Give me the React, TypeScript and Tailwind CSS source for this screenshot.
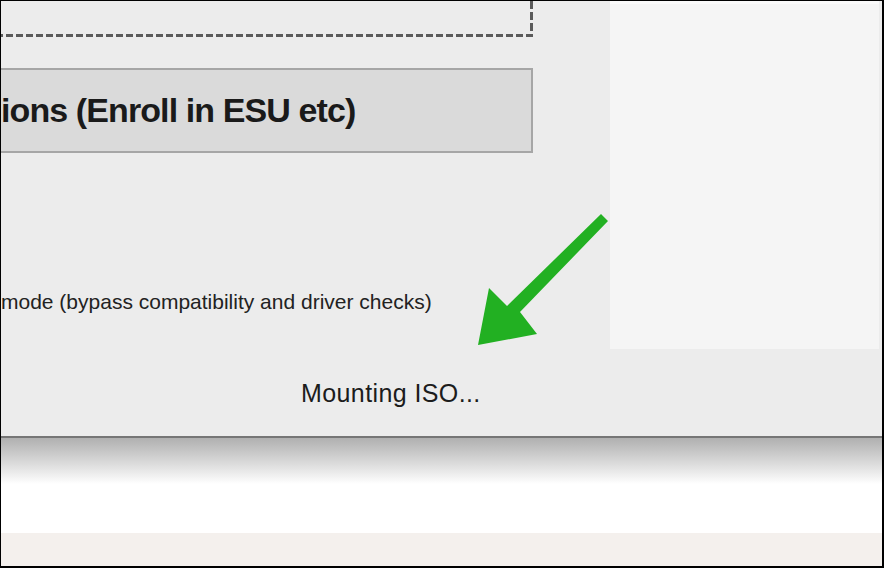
import React from "react";

export default function App() {
  return (
    <div className="relative w-[884px] h-[568px] overflow-hidden bg-white border-t border-l border-r-2 border-b-2 border-black flex flex-col font-['Liberation_Sans',Arial,sans-serif]">
      {/* window */}
      <div className="h-[435px] bg-[#ececec] flex flex-col shrink-0 overflow-hidden">
        <div className="flex h-[348px]">
          <div className="w-[609px] flex flex-col overflow-hidden shrink-0">
            <div className="w-[532px] h-[36px] flex flex-col shrink-0">
              <div className="flex-1 flex justify-end">
                <div className="w-[3px] h-full bg-[repeating-linear-gradient(180deg,#5a5a5a_0_8px,transparent_8px_11px)]" />
              </div>
              <div className="h-[3px] w-full bg-[repeating-linear-gradient(270deg,#5a5a5a_0_7px,transparent_7px_10px)]" />
            </div>
            <div className="mt-[31px] ml-[-20px] w-[552px] h-[85px] border-2 border-[#a6a6a6] bg-[#dadada] flex items-center pl-[18px] pb-[2px] shrink-0">
              <span className="text-[34px] font-bold text-[#1a1a1a] tracking-[-0.9px] whitespace-nowrap leading-none">
                ions (Enroll in ESU etc)
              </span>
            </div>
            <div className="mt-[138px] text-[21px] text-[#222] whitespace-nowrap leading-none">
              mode (bypass compatibility and driver checks)
            </div>
          </div>
          <div className="w-[269px] h-[348px] bg-[#f5f5f5] border-t-[3px] border-[#fafafa]" />
        </div>
        <div className="pl-[300px] pt-[32px] text-[25px] text-[#1c1c1c] tracking-[0.4px] leading-none whitespace-nowrap">
          Mounting ISO...
        </div>
      </div>
      <div className="h-[2px] bg-[#767676] shrink-0" />
      <div className="h-[46px] bg-gradient-to-b from-[#b0b0b0] to-white shrink-0" />
      <div className="flex-1 bg-white" />
      <div className="h-[33px] bg-[#f4f0ed] shrink-0" />

      {/* annotation arrow */}
      <svg className="absolute left-0 top-0 pointer-events-none" width="884" height="568" viewBox="0 0 884 568">
        <polygon
          points="600,213 607,220 519,311 536,333 477,344 488,287 506,305"
          fill="#22b022"
        />
      </svg>
    </div>
  );
}
